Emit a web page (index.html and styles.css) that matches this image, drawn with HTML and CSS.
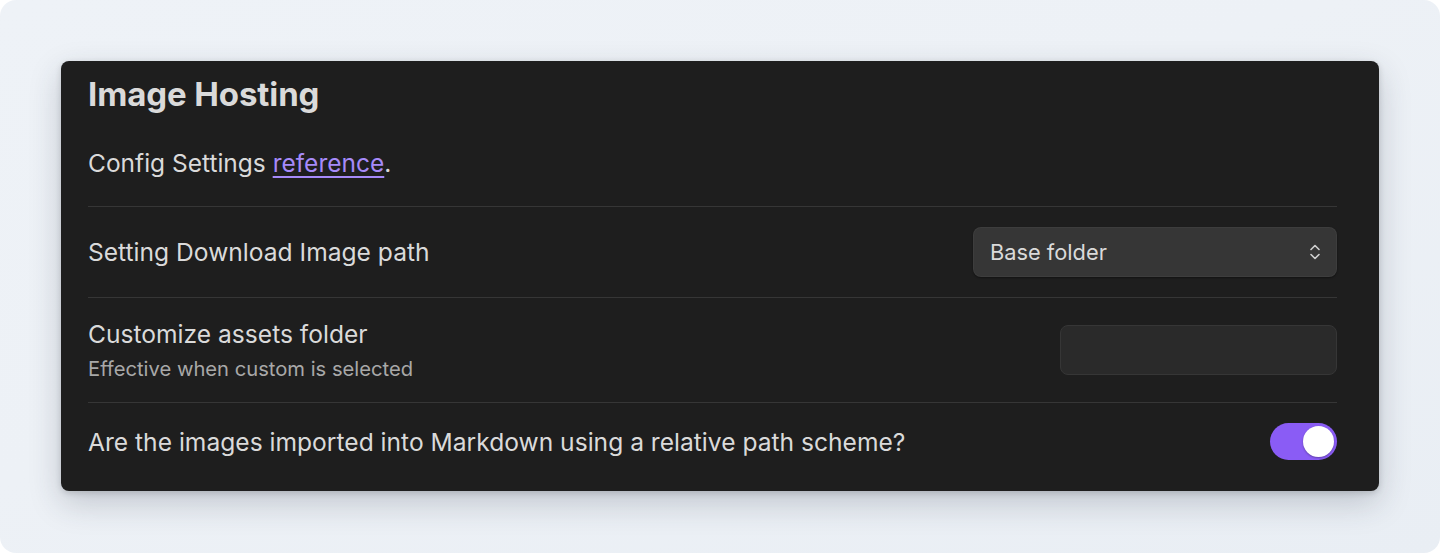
FILE: index.html
```html
<!DOCTYPE html>
<html>
<head>
<meta charset="utf-8">
<link rel="stylesheet" href="styles.css">
</head>
<body>
<div class="frame">
  <div class="card">
    <h2 class="title">Image Hosting</h2>
    <p class="intro">Config Settings <a class="link" href="#">reference</a>.</p>
    <div class="row">
      <div class="info"><div class="name">Setting Download Image path</div></div>
      <div class="select">
        <span>Base folder</span>
        <svg class="chev" width="12" height="18" viewBox="0 0 12 18"><path d="M2 6.5 L6 2.5 L10 6.5 M2 11.5 L6 15.5 L10 11.5" fill="none" stroke="#d0d0d0" stroke-width="1.6" stroke-linecap="round" stroke-linejoin="round"/></svg>
      </div>
    </div>
    <div class="row">
      <div class="info">
        <div class="name">Customize assets folder</div>
        <div class="desc">Effective when custom is selected</div>
      </div>
      <div class="input"></div>
    </div>
    <div class="row last">
      <div class="info"><div class="name">Are the images imported into Markdown using a relative path scheme?</div></div>
      <div class="toggle"><div class="knob"></div></div>
    </div>
  </div>
</div>
</body>
</html>
```
FILE: styles.css
```css
html, body { margin: 0; padding: 0; background: #ffffff; }
body { font-family: Inter, "Noto Sans", sans-serif; }
.frame {
  width: 1440px; height: 553px; box-sizing: border-box;
  border-radius: 16px;
  background: linear-gradient(160deg, #eef2f7 0%, #edf1f6 45%, #e9eef4 100%);
  padding: 61px 61px 0 61px;
}
.card {
  background: #1e1e1e;
  border-radius: 8px;
  padding: 15px 42px 11px 27px;
  box-shadow: 0 12px 32px rgba(40, 50, 70, 0.22), 0 2px 6px rgba(0,0,0,0.15);
  color: #dadada;
}
.title {
  margin: 0; font-size: 33px; line-height: 36px; font-weight: 700;
  color: #dadada; letter-spacing: -0.1px;
}
.intro {
  margin: 36px 0 0 0; font-size: 24.5px; line-height: 30px; padding-bottom: 28px;
}
.link { color: #a68af9; text-decoration: underline; text-underline-offset: 4px; }
.row {
  display: flex; align-items: center; justify-content: space-between;
  border-top: 1px solid #363636; padding: 20px 0;
}
.row.last { padding-bottom: 20px; }
.name { font-size: 24.6px; line-height: 32px; }
.desc { font-size: 20.2px; line-height: 26px; margin-top: 6px; color: #a8a8a8; }
.select {
  width: 364px; height: 50px; box-sizing: border-box;
  background: #363636; border-radius: 8px;
  box-shadow: 0 1px 2px rgba(0,0,0,0.4), inset 0 0 0 1px rgba(255,255,255,0.04);
  display: flex; align-items: center; justify-content: space-between;
  padding: 0 16px 0 17px; font-size: 21.8px; color: #dadada;
}
.chev { display: block; }
.input {
  width: 277px; height: 50px; box-sizing: border-box;
  background: #2a2a2a; border: 1.5px solid #363636; border-radius: 8px;
}
.toggle {
  width: 67px; height: 37px; box-sizing: border-box; border-radius: 19px;
  background: #8a5cf5; padding: 3px; display: flex; justify-content: flex-end;
}
.knob {
  width: 31px; height: 31px; border-radius: 50%; background: #ffffff;
  box-shadow: 0 1px 2px rgba(0,0,0,0.3);
}
```
